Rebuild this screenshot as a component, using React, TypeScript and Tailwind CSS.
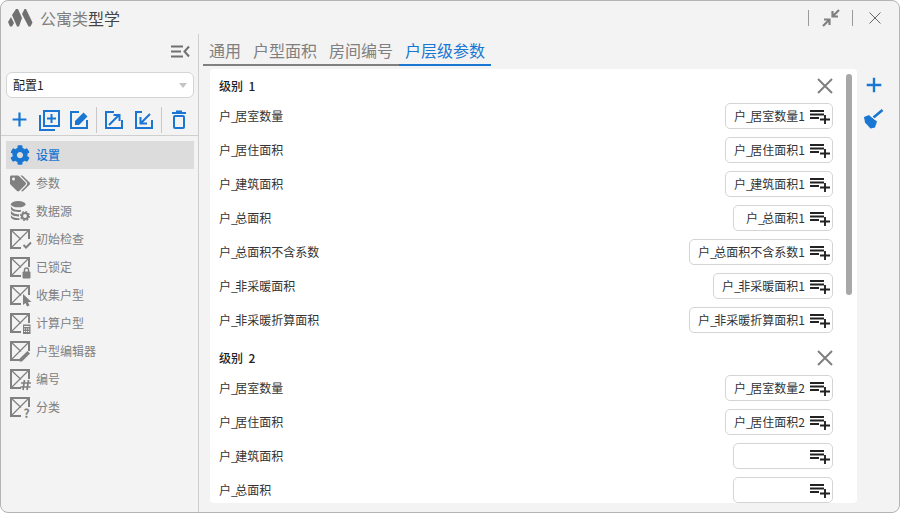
import { FaCog, FaTags } from "react-icons/fa";
import { ReactNode } from "react";

const FONT = "font-['Noto_Sans_CJK_SC','Liberation_Sans',sans-serif]";

function Svg({ size = 22, className = "text-[#1976d2]", children }: { size?: number; className?: string; children: ReactNode }) {
  return (
    <svg width={size} height={size} viewBox="0 0 22 22" className={className} fill="none">
      {children}
    </svg>
  );
}

function PlusIcon({ size = 22 }: { size?: number }) {
  return (
    <Svg size={size}>
      <path d="M11 3v16M3 11h16" stroke="currentColor" strokeWidth="2.600" />
    </Svg>
  );
}

function AddBoxIcon() {
  return (
    <Svg>
      <path d="M2 6v15h15" stroke="currentColor" strokeWidth="2" />
      <rect x="6" y="2" width="15" height="15" stroke="currentColor" strokeWidth="2" />
      <path d="M13.500 5v9M9 9.500h9" stroke="currentColor" strokeWidth="2" />
    </Svg>
  );
}

function EditBoxIcon() {
  return (
    <Svg>
      <path d="M11 3H3v16h16v-8" stroke="currentColor" strokeWidth="2" />
      <path d="M7 16v-4L15.500 3.500l4 4L11 16z" fill="currentColor" />
    </Svg>
  );
}

function BoxArrow({ into }: { into?: boolean }) {
  return (
    <Svg>
      {into ? (
        <>
          <path d="M9 3H3v16h16v-8" stroke="currentColor" strokeWidth="2" />
          <path d="M17 5 8 14M7.500 8v6.500H14" stroke="currentColor" strokeWidth="2" />
        </>
      ) : (
        <>
          <path d="M11 3H3v16h16v-8" stroke="currentColor" strokeWidth="2" />
          <path d="M6 16 16.500 5.500M10.500 6H16.500v6" stroke="currentColor" strokeWidth="2" />
        </>
      )}
    </Svg>
  );
}

function TrashIcon() {
  return (
    <Svg>
      <path d="M4 4h14M8 2.500h6" stroke="currentColor" strokeWidth="2" />
      <rect x="6" y="7" width="10" height="12" rx="1" stroke="currentColor" strokeWidth="2" />
    </Svg>
  );
}

function BroomIcon() {
  return (
    <svg width="20" height="20" viewBox="0 0 20 20" className="text-[#1976d2]" fill="currentColor">
      <path d="M18.500 1 9.500 8.500" stroke="currentColor" strokeWidth="2.600" />
      <path d="M5 6l8 6.500-2 6-4.500 1L1 13.500 0 8z" />
      <path d="M5.500 6l5.500 4.500" stroke="#f3f3f3" strokeWidth="1" />
    </svg>
  );
}

function PlaylistAdd() {
  return (
    <svg width="20" height="14" viewBox="0 0 20 14" className="mt-[2px] shrink-0 text-[#222]" fill="none">
      <path d="M0 1h14M0 4.500h14M0 8h9M10 9.500h10M15 5v9" stroke="currentColor" strokeWidth="1.900" />
    </svg>
  );
}

function CrossedBox({ children }: { children?: ReactNode }) {
  return (
    <svg width="20" height="20" viewBox="0 0 20 20" fill="none" className="overflow-visible text-[#808080]">
      <path d="M11 19H1V1h18v9" stroke="currentColor" strokeWidth="2" />
      <path d="M1 1l10 9.500M19 1 1 19" stroke="currentColor" strokeWidth="1.200" />
      {children}
    </svg>
  );
}

const overlays: Record<string, ReactNode> = {
  check: <path d="M13.500 16l2.500 2.500 5-5" stroke="currentColor" strokeWidth="2" />,
  lock: (
    <>
      <rect x="12.500" y="14.500" width="8" height="7" rx="1" fill="currentColor" />
      <path d="M14.500 15v-2a2 2 0 0 1 4 0v2" stroke="currentColor" strokeWidth="1.500" />
    </>
  ),
  cursor: <path d="M13 9l8.500 8H18l1.500 3.500-2.500 1L15.500 18 13 20z" fill="currentColor" />,
  calc: (
    <>
      <rect x="13" y="11.500" width="7.500" height="9.500" fill="currentColor" />
      <path d="M14 13.500h5.500" stroke="#f3f3f3" strokeWidth="1" />
      <path d="M14 16h5.500M14 18.500h5.500" stroke="#f3f3f3" strokeWidth="1" strokeDasharray="1.200 0.800" />
    </>
  ),
  pencil: <path d="M9.500 20.500v-2.800l8-7.700 2.500 2.500-8 8z" fill="currentColor" />,
  hash: <path d="M14.500 11l-1.500 10M18.500 11 17 21M11 14h10M10.500 18h10" stroke="currentColor" strokeWidth="1.700" />,
};

function DatabaseIcon() {
  return (
    <svg width="22" height="22" viewBox="0 0 22 22" fill="#808080">
      <ellipse cx="9" cy="3.500" rx="8" ry="3.500" />
      <path d="M1 5.500v3c0 2 3.500 3.500 8 3.500 1 0 2-.1 3-.3V9.500c-1 .2-2 .3-3 .3-4 0-7-1.400-8-4.300zM1 10.500v3c0 2 3.500 3.500 8 3.500h1v-2.500c-4 .3-8-1.200-9-4zM1 15.500v2c0 2 3.500 3.500 8 3.500h1.500v-2C6 19 2 18 1 15.500z" />
      <circle cx="16.500" cy="16.500" r="3.300" fill="none" stroke="#808080" strokeWidth="2.400" />
      <circle cx="16.500" cy="16.500" r="5" fill="none" stroke="#808080" strokeWidth="1.200" strokeDasharray="2 1.900" />
    </svg>
  );
}

const navItems: { label: string; icon: ReactNode; active?: boolean }[] = [
  { label: "设置", active: true, icon: <FaCog size={20} className="text-[#1976d2]" /> },
  { label: "参数", icon: <FaTags size={21} className="text-[#808080]" /> },
  { label: "数据源", icon: <DatabaseIcon /> },
  { label: "初始检查", icon: <CrossedBox>{overlays.check}</CrossedBox> },
  { label: "已锁定", icon: <CrossedBox>{overlays.lock}</CrossedBox> },
  { label: "收集户型", icon: <CrossedBox>{overlays.cursor}</CrossedBox> },
  { label: "计算户型", icon: <CrossedBox>{overlays.calc}</CrossedBox> },
  { label: "户型编辑器", icon: <CrossedBox>{overlays.pencil}</CrossedBox> },
  { label: "编号", icon: <CrossedBox>{overlays.hash}</CrossedBox> },
  {
    label: "分类",
    icon: (
      <CrossedBox>
        <text x="13.500" y="21" fontSize="12" fontWeight="700" fill="currentColor">
          ?
        </text>
      </CrossedBox>
    ),
  },
];

const levels = [
  {
    name: "级别  1",
    rows: [
      ["户_居室数量", "户_居室数量1"],
      ["户_居住面积", "户_居住面积1"],
      ["户_建筑面积", "户_建筑面积1"],
      ["户_总面积", "户_总面积1"],
      ["户_总面积不含系数", "户_总面积不含系数1"],
      ["户_非采暖面积", "户_非采暖面积1"],
      ["户_非采暖折算面积", "户_非采暖折算面积1"],
    ],
  },
  {
    name: "级别  2",
    rows: [
      ["户_居室数量", "户_居室数量2"],
      ["户_居住面积", "户_居住面积2"],
      ["户_建筑面积", ""],
      ["户_总面积", ""],
    ],
  },
];

function Divider() {
  return <div className="mx-[2px] h-[26px] w-px bg-[#c8c8c8]" />;
}

function ToolButton({ children }: { children: ReactNode }) {
  return <button className="flex h-[30px] w-[30px] items-center justify-center">{children}</button>;
}

function Sidebar() {
  return (
    <aside className="flex w-[198px] shrink-0 flex-col border-r border-[#cfcfcf]">
      <div className="flex h-[34px] items-center justify-end pr-[8px]">
        <svg width="19" height="13" viewBox="0 0 19 13" fill="none" className="text-[#707070]">
          <path d="M0 1.500h12M0 6.500h10M0 11.500h12M18 1.500 13.500 6.500l4.500 5" stroke="currentColor" strokeWidth="2" />
        </svg>
      </div>
      <div className="ml-[5px] mr-[4px] mt-[4px] flex h-[26px] items-center justify-between rounded-[6px] border border-[#d4d4d4] bg-white pl-[6px] pr-[6px] text-[12px] text-[#222]">
        <span>配置1</span>
        <span className="h-0 w-0 border-x-[4px] border-t-[5px] border-x-transparent border-t-[#c4c4c4]" />
      </div>
      <div className="mt-[6px] flex h-[32px] items-center border-b border-[#cfcfcf] pl-[3px]">
        <ToolButton>
          <PlusIcon size={19} />
        </ToolButton>
        <ToolButton>
          <AddBoxIcon />
        </ToolButton>
        <ToolButton>
          <EditBoxIcon />
        </ToolButton>
        <Divider />
        <ToolButton>
          <BoxArrow />
        </ToolButton>
        <ToolButton>
          <BoxArrow into />
        </ToolButton>
        <Divider />
        <ToolButton>
          <TrashIcon />
        </ToolButton>
      </div>
      <nav className="ml-[5px] mr-[4px] mt-[5px] flex flex-col">
        {navItems.map((item) => (
          <div
            key={item.label}
            className={`flex h-[28px] items-center gap-[6px] pl-[4px] text-[12px] ${
              item.active ? "bg-[#dcdcdc] font-medium text-[#1976d2]" : "text-[#808080]"
            }`}
          >
            <span className="flex w-[20px] justify-center">{item.icon}</span>
            {item.label}
          </div>
        ))}
      </nav>
    </aside>
  );
}

// the underscore is narrower in the reference font
function FieldText({ text }: { text: string }) {
  const [head, ...rest] = text.split("_");
  if (!rest.length) return <span className="text-[#333]">{text}</span>;
  return (
    <span className="text-[#333]">
      {head}
      <span className="tracking-[-2.5px]">_</span>
      {rest.join("_")}
    </span>
  );
}

function FieldRow({ label, value }: { label: string; value: string }) {
  return (
    <div className="flex h-[34px] items-center justify-between">
      <FieldText text={label} />
      <div className="flex h-[26px] min-w-[100px] items-center justify-end gap-[5px] rounded-[5px] border border-[#d4d4d4] bg-white pl-[8px] pr-[2px]">
        <FieldText text={value} />
        <PlaylistAdd />
      </div>
    </div>
  );
}

function Tabs() {
  const tabs = ["通用", "户型面积", "房间编号", "户层级参数"];
  return (
    <div className="ml-[4px] mr-[9px] flex h-[32px] w-[288px] items-end text-[16px] leading-[28px] text-[#808080]">
      {tabs.map((t, i) => (
        <span
          key={t}
          className={`h-[32px] border-b-2 px-[6px] pt-[2px] ${
            i === 3 ? "border-[#1976d2] text-[#1976d2]" : "border-[#808080]"
          }`}
        >
          {t}
        </span>
      ))}
    </div>
  );
}

export default function App() {
  return (
    <div className={`flex h-[513px] w-[900px] flex-col overflow-hidden rounded-[8px] border border-[#b4b4b4] bg-[#f3f3f3] ${FONT}`}>
      <header className="flex h-[33px] shrink-0 items-center pl-[7px]">
        <svg width="25" height="18" viewBox="0 0 25 18" fill="#707070">
          <path d="M0 13 3 8l3 6-2 3.500H2zM4 6l4-6h2l4 9-3 8.500H9zM14 5l2.500-5H18l6.500 13.500-2 4h-2z" />
        </svg>
        <span className="ml-[7px] text-[16px] text-[#808080]">
          公寓类<span className="text-[#444]">型学</span>
        </span>
        <div className="ml-auto flex items-center">
          <div className="h-[16px] w-px bg-[#9a9a9a]" />
          <button className="flex w-[43px] justify-center">
            <svg width="18" height="18" viewBox="0 0 18 18" fill="none" className="text-[#808080]">
              <path d="M1 17 7 11M2 10.500h5.500V16M17 1l-6 6M10.500 2v5.500H16" stroke="currentColor" strokeWidth="2.200" />
            </svg>
          </button>
          <div className="h-[16px] w-px bg-[#9a9a9a]" />
          <button className="flex w-[46px] justify-center pr-[3px]">
            <svg width="12" height="12" viewBox="0 0 12 12" fill="none" className="text-[#666]">
              <path d="M.5.500l11 11M11.500.500l-11 11" stroke="currentColor" strokeWidth="1" />
            </svg>
          </button>
        </div>
      </header>
      <div className="flex min-h-0 flex-1">
        <Sidebar />
        <main className="flex min-w-0 flex-1 flex-col">
          <Tabs />
          <div className="flex min-h-0 flex-1 pb-[9px]">
            <div className="relative ml-[11px] mt-[3px] w-[647px] overflow-hidden rounded-[4px] bg-white pl-[9px] pr-[24px] text-[12px]">
              {levels.map((level) => (
                <section key={level.name} className="mb-[4px]">
                  <div className="flex h-[30px] items-center justify-between pt-[4px]">
                    <span className="whitespace-pre font-medium text-[#222]">{level.name}</span>
                    <svg width="16" height="16" viewBox="0 0 16 16" fill="none" className="text-[#808080]">
                      <path d="M1 1l14 14M15 1 1 15" stroke="currentColor" strokeWidth="2" />
                    </svg>
                  </div>
                  {level.rows.map(([label, value]) => (
                    <FieldRow key={label} label={label} value={value} />
                  ))}
                </section>
              ))}
              <div className="absolute right-[5px] top-[5px] h-[221px] w-[6px] rounded-full bg-[#a8a8a8]" />
            </div>
            <div className="ml-[7px] flex flex-col items-center gap-[14px] pt-[9px]">
              <PlusIcon size={20} />
              <BroomIcon />
            </div>
          </div>
        </main>
      </div>
    </div>
  );
}
